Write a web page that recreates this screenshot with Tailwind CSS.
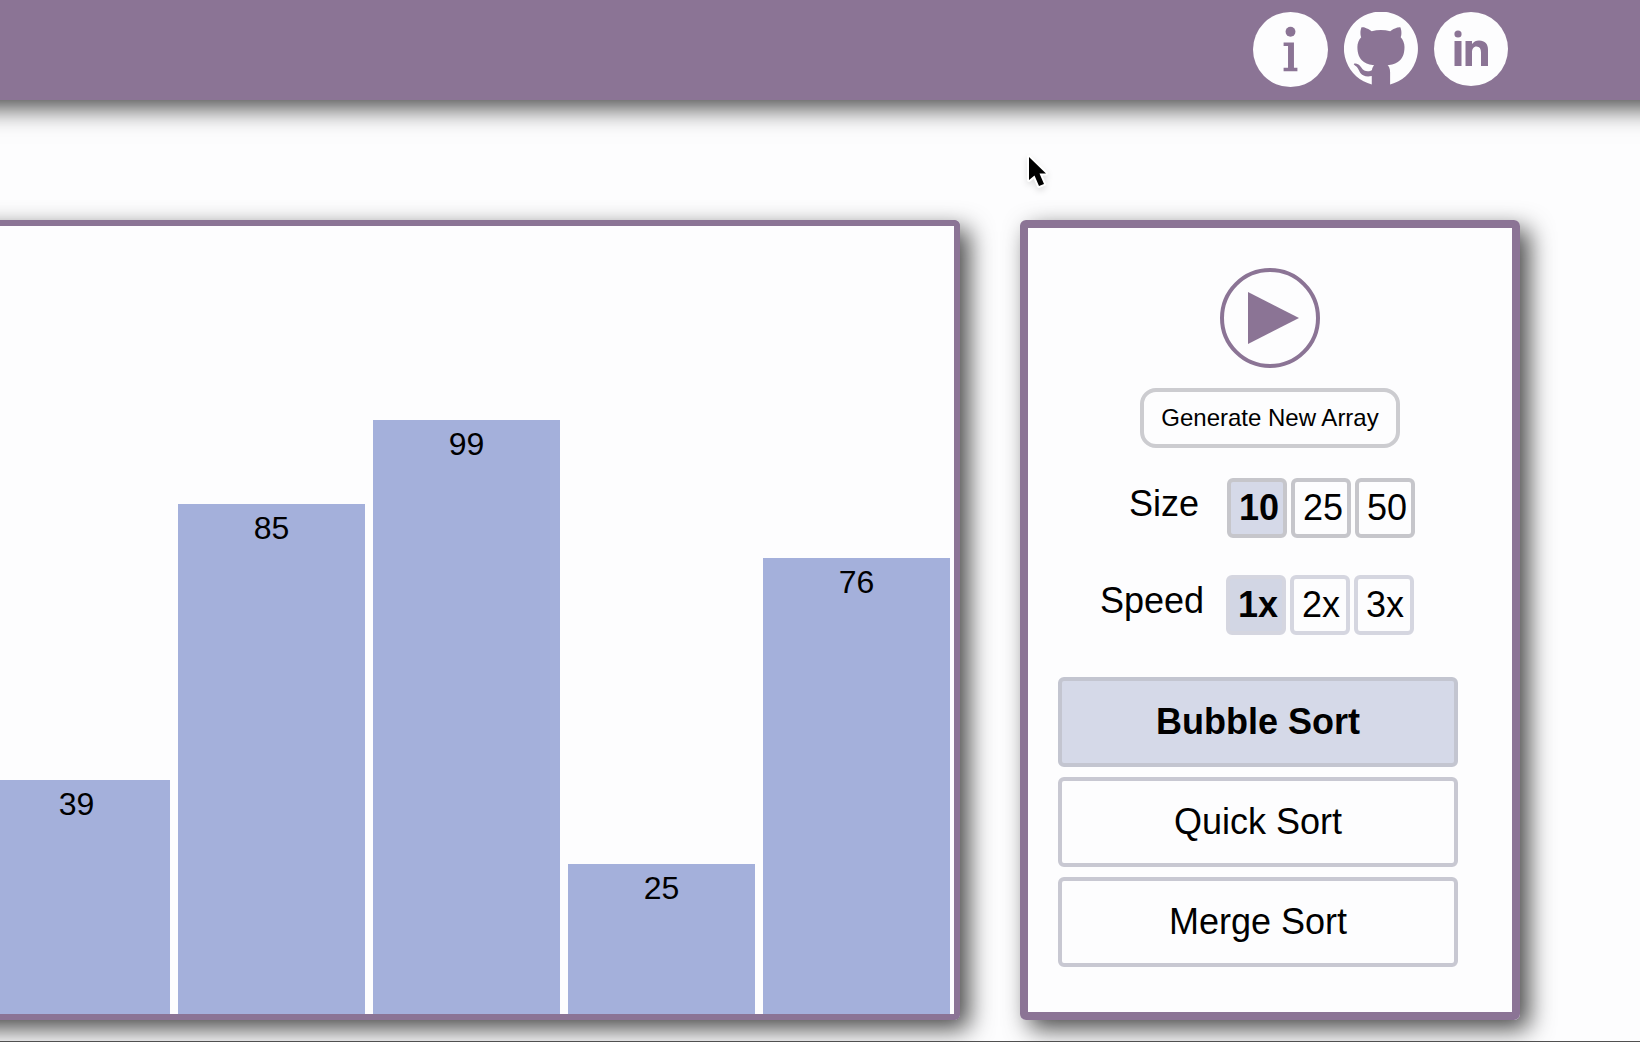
<!DOCTYPE html>
<html lang="en">
<head>
<meta charset="utf-8">
<title>Sorting Visualizer</title>
<script src="https://cdn.jsdelivr.net/npm/@tailwindcss/browser@4"></script>
</head>
<body class="relative flex min-h-screen flex-col overflow-x-hidden border-b border-[#505050] bg-[#fdfdfe] font-['Liberation_Sans',Arial,sans-serif] text-black">
  <header class="-mx-8 flex h-[100px] shrink-0 items-start justify-end gap-4 bg-[#8b7495] pt-3 pr-[164px] shadow-[0_8px_24px_#484848]">
    <a href="#info" aria-label="Information">
      <svg class="size-[75px]" viewBox="0 0 76 76">
        <circle cx="38" cy="38" r="38" fill="#fdfdfe"/>
        <g fill="#8b7495"><circle cx="38" cy="20" r="5"/><path d="M31 31h10.500v25.500H45V60H31v-3.500h4.500V34.500H31z"/></g>
      </svg>
    </a>
    <a href="#github" aria-label="GitHub">
      <svg class="size-[74px]" viewBox="0 .3 24 24" fill="#fdfdfe"><path d="M12 .297c-6.630 0-12 5.373-12 12 0 5.303 3.438 9.800 8.205 11.385.6.113.82-.258.82-.577 0-.285-.01-1.040-.015-2.040-3.338.724-4.042-1.610-4.042-1.610C4.422 18.070 3.633 17.700 3.633 17.700c-1.087-.744.084-.729.084-.729 1.205.084 1.838 1.236 1.838 1.236 1.070 1.835 2.809 1.305 3.495.998h0v0c-2.665-.3-5.466-1.332-5.466-5.930z" fill="none"/><path d="M9.010 23.800v-2.735c-3.338.724-4.042-1.610-4.042-1.610C4.422 18.070 3.633 17.700 3.633 17.700c-1.087-.744.084-.729.084-.729 1.205.084 1.838 1.236 1.838 1.236 1.070 1.835 2.809 1.305 3.495.998.108-.776.417-1.305.76-1.605-2.665-.3-5.466-1.332-5.466-5.930 0-1.310.465-2.380 1.235-3.220-.135-.303-.54-1.523.105-3.176 0 0 1.005-.322 3.300 1.230.96-.267 1.980-.399 3-.405 1.020.006 2.040.138 3 .405 2.280-1.552 3.285-1.230 3.285-1.230.645 1.653.24 2.873.12 3.176.765.84 1.230 1.910 1.230 3.220 0 4.610-2.805 5.625-5.475 5.920.42.36.81 1.096.81 2.220V23.800A12 12 0 1 0 9.010 23.800z"/></svg>
    </a>
    <a href="#linkedin" aria-label="LinkedIn">
      <svg class="size-[74px]" viewBox="0 0 74 74">
        <circle cx="37" cy="37" r="37" fill="#fdfdfe"/>
        <g fill="#8b7495"><circle cx="24" cy="22" r="3.600"/><path d="M20.500 29h7v25h-7zM31.500 29H38v3c2-2.500 4-3.500 7-3.500 6 0 9 3.500 9 9.500v16h-7V40.500c0-4-1.500-6-4.500-6s-4.500 2.500-4.500 6V54h-6.500z"/></g>
      </svg>
    </a>
  </header>

  <main class="flex grow items-start gap-[60px] pt-[120px] pr-[120px] pb-5">
    <section aria-label="Array" class="-ml-10 flex h-[800px] min-w-0 flex-1 items-end justify-end gap-2 overflow-hidden rounded-r-md border-y-6 border-r-6 border-[#8b7495] pr-1 text-center text-[32px] leading-9 shadow-[9px_9px_24px_#484848]">
      <div class="w-[187px] shrink-0 bg-[#a4b0db] pt-1.5" style="height:234px">39</div>
      <div class="w-[187px] shrink-0 bg-[#a4b0db] pt-1.5" style="height:510px">85</div>
      <div class="w-[187px] shrink-0 bg-[#a4b0db] pt-1.5" style="height:594px">99</div>
      <div class="w-[187px] shrink-0 bg-[#a4b0db] pt-1.5" style="height:150px">25</div>
      <div class="w-[187px] shrink-0 bg-[#a4b0db] pt-1.5" style="height:456px">76</div>
    </section>

    <aside class="flex h-[800px] w-[500px] shrink-0 flex-col items-center rounded-md border-8 border-[#8b7495] pt-10 text-4xl leading-10 shadow-[9px_9px_24px_#484848]">
      <button type="button" aria-label="Play" class="size-[100px]">
        <svg class="size-full" viewBox="0 0 100 100"><circle cx="50" cy="50" r="48" fill="none" stroke="#8b7495" stroke-width="4"/><path d="M28 24l51 26-51 26z" fill="#8b7495"/></svg>
      </button>
      <button type="button" class="mt-5 h-[60px] w-[260px] rounded-2xl border-4 border-[#ccccd0] text-2xl whitespace-nowrap">Generate New Array</button>

      <div class="mt-[30px] flex items-start gap-7 self-end pr-[97px]">
        <span id="size" class="pt-1.5">Size</span>
        <div role="group" aria-labelledby="size" class="flex gap-1">
          <button type="button" aria-pressed="true" class="size-[60px] rounded-md border-4 border-[#c6c6cb] bg-[#d5d9e8] pl-1 font-bold">10</button>
          <button type="button" class="size-[60px] rounded-md border-4 border-[#c6c6cb] pl-1">25</button>
          <button type="button" class="size-[60px] rounded-md border-4 border-[#c6c6cb] pl-1">50</button>
        </div>
      </div>

      <div class="mt-[37px] flex items-start gap-[22px] self-end pr-[98px]">
        <span id="speed" class="pt-1.5">Speed</span>
        <div role="group" aria-labelledby="speed" class="flex gap-1">
          <button type="button" aria-pressed="true" class="size-[60px] rounded-md border-4 border-[#d5d6e0] bg-[#d2d6e4] pl-1 font-bold">1x</button>
          <button type="button" class="size-[60px] rounded-md border-4 border-[#d5d6e0] pl-0.5">2x</button>
          <button type="button" class="size-[60px] rounded-md border-4 border-[#d5d6e0] pl-0.5">3x</button>
        </div>
      </div>

      <div class="mt-[42px] mr-6 flex w-[400px] flex-col gap-2.5">
        <button type="button" aria-pressed="true" class="h-[90px] rounded-md border-4 border-[#c3c5d0] bg-[#d5d9e8] font-bold">Bubble Sort</button>
        <button type="button" class="h-[90px] rounded-md border-4 border-[#c8c8d2]">Quick Sort</button>
        <button type="button" class="h-[90px] rounded-md border-4 border-[#c8c8d2]">Merge Sort</button>
      </div>
    </aside>
  </main>

  <svg class="pointer-events-none absolute top-[152px] left-[1024px] h-[40px] w-[28px] drop-shadow-md" viewBox="0 0 28 40" aria-hidden="true">
    <path d="M5 5v23l5.500-4.500L15 34l5-2-4.500-10.500H22z" fill="#000" stroke="#fff" stroke-width="4" stroke-linejoin="round" paint-order="stroke"/>
  </svg>
</body>
</html>
